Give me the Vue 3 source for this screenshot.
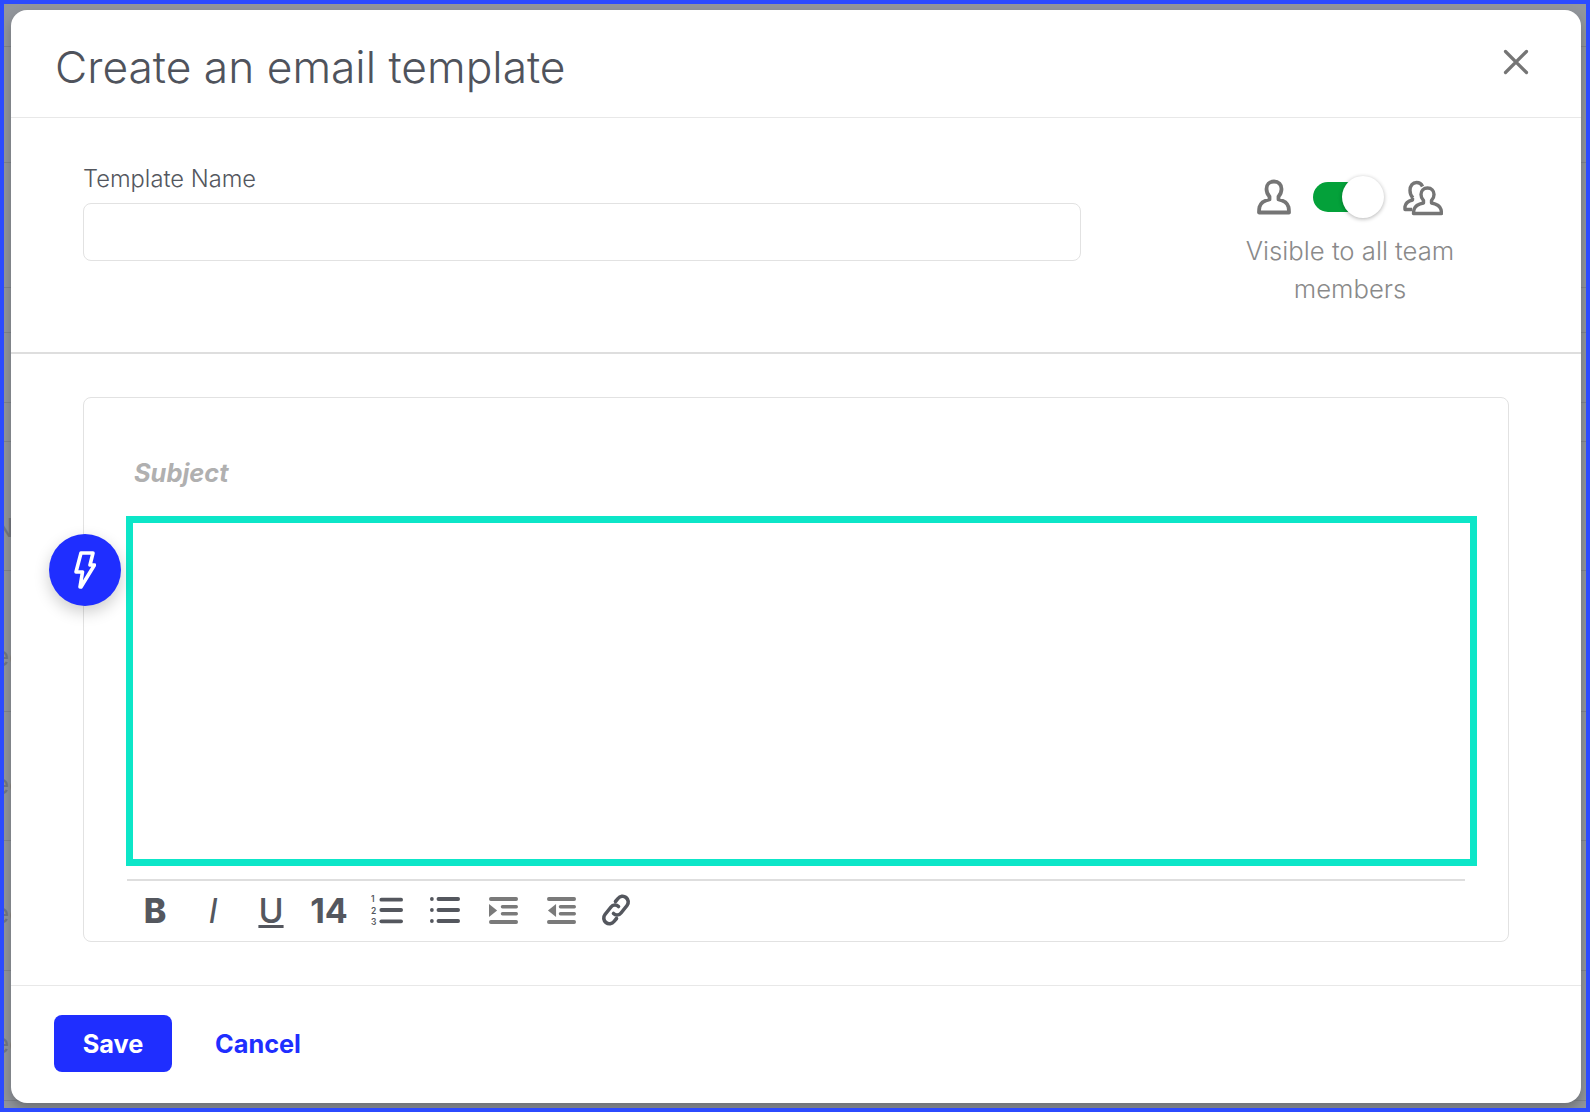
<script setup>
const rowLines = [46, 162, 287, 332, 402, 441, 570, 711, 840, 970, 1100]
const rowTexts = [
  { top: 511, text: 'N' },
  { top: 640, text: 'ec' },
  { top: 768, text: 'ec' },
  { top: 897, text: 'ec' },
  { top: 1027, text: 'ec' },
]
const tools = ['outdent', 'indent']
</script>

<template>
  <div class="page">
    <div class="row-line" v-for="y in rowLines" :key="y" :style="{ top: y - 4 + 'px' }"></div>
    <span class="row-text" v-for="t in rowTexts" :key="t.top" :style="{ top: t.top - 4 + 'px' }">{{ t.text }}</span>
    <div class="modal">
      <header class="modal-head">
        <h1>Create an email template</h1>
        <button class="close" aria-label="Close">
          <svg width="26" height="26" viewBox="0 0 26 26" fill="none" stroke="#757575" stroke-width="3.200" stroke-linecap="round">
            <path d="M2.500 2.500l21 21M23.500 2.500l-21 21" />
          </svg>
        </button>
      </header>

      <section class="name-row">
        <div class="name-field">
          <label>Template Name</label>
          <input type="text" />
        </div>
        <div class="visibility">
          <div class="toggle-row">
            <svg class="person" width="34" height="36" viewBox="0 0 34 36" fill="none" stroke="#757575" stroke-width="3.800" stroke-linejoin="round">
              <path d="M17 2.500c-4.600 0-7.500 3.200-7.500 7.500 0 3.200 1.200 5.600 3 7.500v3c-5.500 1-9 3.500-10 7.500-.4 1.800-.5 5.500-.5 5.500h30s-.1-3.700-.5-5.500c-1-4-4.500-6.500-10-7.500v-3c1.800-1.900 3-4.300 3-7.500 0-4.300-2.900-7.500-7.500-7.500z" />
            </svg>
            <div class="switch"><span class="knob"></span></div>
            <svg width="40" height="38" viewBox="0 0 40 38" fill="none" stroke="#757575" stroke-width="3.400" stroke-linejoin="round">
              <path d="M10 20c-2-2-3-4-3-7.500 0-5 2.800-8 6.500-8 3 0 5 1.500 6 4" />
              <path d="M9.500 20v2c-4 1-7 3-7.500 6.500-.1 1 0 3 0 3h7" />
              <path d="M24.500 10c-4 0-6.500 3-6.500 6.500 0 2.500 1 4.500 2.500 6v2.500c-5 1-8.500 3-9.500 6.500-.3 1-.5 4-.5 4h28s-.2-3-.5-4c-1-3.500-4.500-5.500-9.500-6.500V22.500c1.500-1.500 2.500-3.500 2.500-6 0-3.500-2.500-6.500-6.500-6.500z" />
            </svg>
          </div>
          <p>Visible to all team members</p>
        </div>
      </section>

      <section class="editor-wrap">
        <div class="editor-card">
          <div class="subject">Subject</div>
          <div class="body-box"></div>
          <div class="toolbar">
            <span class="tool tool-b">B</span>
            <span class="tool tool-i">I</span>
            <span class="tool tool-u">U</span>
            <span class="tool tool-size">14</span>
            <span class="tool">
              <svg width="32" height="32" viewBox="0 0 34 32" fill="#54575e">
                <text x="0" y="8" font-size="9" font-weight="600" font-family="Inter">1</text>
                <text x="0" y="20" font-size="9" font-weight="600" font-family="Inter">2</text>
                <text x="0" y="32" font-size="9" font-weight="600" font-family="Inter">3</text>
                <rect x="9" y="3" width="25" height="4" rx="2" />
                <rect x="9" y="14" width="25" height="4" rx="2" />
                <rect x="9" y="26" width="25" height="4" rx="2" />
              </svg>
            </span>
            <span class="tool">
              <svg width="30" height="32" viewBox="0 0 32 32" preserveAspectRatio="none" fill="#54575e">
                <circle cx="2" cy="5" r="2" /><circle cx="2" cy="16" r="2" /><circle cx="2" cy="27" r="2" />
                <rect x="7" y="3" width="25" height="4" rx="2" />
                <rect x="7" y="14" width="25" height="4" rx="2" />
                <rect x="7" y="25" width="25" height="4" rx="2" />
              </svg>
            </span>
            <span class="tool" v-for="t in tools" :key="t">
              <svg width="29" height="32" viewBox="0 0 32 32" preserveAspectRatio="none" fill="#7a7a7a">
                <rect x="0" y="3" width="32" height="4" rx="2" />
                <rect x="13" y="11" width="19" height="3.600" rx="1.800" />
                <rect x="13" y="18" width="19" height="3.600" rx="1.800" />
                <rect x="0" y="26" width="32" height="4" rx="2" />
                <path v-if="t === 'outdent'" d="M0 10l9 6.500-9 6.500z" />
                <path v-else d="M10 10l-9 6.500 9 6.500z" />
              </svg>
            </span>
            <span class="tool tool-link">
              <svg width="30" height="34" viewBox="0 0 30 34" fill="none" stroke="#54575e" stroke-width="3.600" stroke-linecap="round">
                <path d="M12.500 20.500c2 2 5.500 2 7.500-.5l6-7.500c2-2.500 1.500-6-1-8s-6-1.500-8 1l-2.500 3" />
                <path d="M17.500 13.500c-2-2-5.500-2-7.500.5l-6 7.500c-2 2.500-1.500 6 1 8s6 1.500 8-1l2.500-3" />
              </svg>
            </span>
          </div>
        </div>
        <button class="bolt" aria-label="Snippets">
          <svg width="22" height="38" viewBox="0 0 22 38" fill="none" stroke="#fff" stroke-width="3.600" stroke-linejoin="round">
            <path d="M7 2h12l-3 12h4.500L7 36H6l2.500-15H2z" />
          </svg>
        </button>
      </section>

      <footer class="modal-foot">
        <button class="save">Save</button>
        <button class="cancel">Cancel</button>
      </footer>
    </div>
  </div>
</template>

<style>
html, body { margin: 0; }
</style>

<style scoped>
.page {
  position: relative;
  width: 1590px;
  height: 1112px;
  box-sizing: border-box;
  border: 4px solid #2c4bff;
  background: #92969c;
  font-family: Inter, "Liberation Sans", sans-serif;
  overflow: hidden;
}

.row-line {
  position: absolute;
  left: 0;
  right: 0;
  height: 1px;
  background: #82868c;
}

.row-text {
  position: absolute;
  left: -10px;
  font-size: 26px;
  line-height: 34px;
  color: #75797f;
}

.modal {
  position: absolute;
  left: 7px;
  top: 6px;
  width: 1570px;
  height: 1093px;
  background: #fff;
  border-radius: 16px;
  display: flex;
  flex-direction: column;
  box-shadow: 0 6px 12px rgba(0, 0, 0, 0.25);
}

.modal-head {
  height: 107px;
  border-bottom: 1px solid #e8e8e8;
  display: flex;
  align-items: center;
  justify-content: space-between;
  padding: 0 52px 0 44px;
  flex-shrink: 0;
}

.modal-head h1 {
  margin: 6px 0 0;
  font-size: 44.300px;
  font-weight: 300;
  color: #4f535c;
}

.close {
  background: none;
  border: none;
  padding: 0;
  display: flex;
  margin-bottom: 4px;
}

.name-row {
  height: 236px;
  border-bottom: 2px solid #dedede;
  display: flex;
  justify-content: space-between;
  padding: 46px 101px 0 72px;
  box-sizing: border-box;
  flex-shrink: 0;
}

.name-field {
  width: 998px;
}

.name-field label {
  display: block;
  font-size: 23.700px;
  color: #54575e;
  font-weight: 300;
  margin-bottom: 10px;
}

.name-field input {
  display: block;
  width: 100%;
  height: 58px;
  box-sizing: border-box;
  border: 1px solid #e2e2e2;
  border-radius: 8px;
}

.visibility {
  width: 260px;
  margin-top: 11px;
  text-align: center;
}

.toggle-row {
  display: flex;
  align-items: center;
  justify-content: center;
  gap: 20px;
  height: 44px;
}

.person {
  margin-right: 2px;
}

.switch {
  position: relative;
  width: 70px;
  height: 30px;
  border-radius: 15px;
  background: #04a13a;
}

.knob {
  position: absolute;
  right: -1px;
  top: -6px;
  width: 42px;
  height: 42px;
  border-radius: 50%;
  background: #fff;
  box-shadow: 0 1px 4px rgba(0, 0, 0, 0.3);
}

.visibility p {
  margin: 13px 0 0;
  font-size: 25.700px;
  font-weight: 300;
  line-height: 38px;
  color: #8a8a8a;
}

.editor-wrap {
  position: relative;
  flex: 1;
  padding: 43px 72px 43px 72px;
  display: flex;
}

.editor-card {
  flex: 1;
  box-sizing: border-box;
  border: 1px solid #e2e2e2;
  border-radius: 8px;
  padding: 0 43px 0 41px;
  display: flex;
  flex-direction: column;
}

.subject {
  margin: 60px 0 28px 9px;
  font-size: 25.400px;
  font-weight: 700;
  font-style: italic;
  color: #b0b0b0;
  line-height: 30px;
}

.body-box {
  height: 350px;
  flex-shrink: 0;
  box-sizing: border-box;
  border: 7px solid #0de6c8;
  margin: 0 -12px 0 1px;
}

.toolbar {
  margin: 13px 0 0 2px;
  border-top: 2px solid #dedede;
  display: flex;
  align-items: center;
  height: 58px;
}

.tool {
  width: 58px;
  display: flex;
  align-items: center;
  justify-content: center;
  color: #54575e;
  font-size: 34px;
  font-weight: 700;
}

.tool-b {
  margin-left: -1px;
  font-weight: 800;
}

.tool-i {
  font-weight: 400;
  font-style: italic;
}

.tool-u {
  text-decoration: underline;
  font-weight: 500;
}

.tool-link {
  margin-left: -3px;
}

.bolt {
  position: absolute;
  left: 38px;
  top: 180px;
  width: 72px;
  height: 72px;
  border: none;
  border-radius: 50%;
  background: #1f2eff;
  display: flex;
  align-items: center;
  justify-content: center;
  padding: 0;
  box-shadow: 0 6px 16px rgba(0, 0, 0, 0.2);
}

.modal-foot {
  height: 118px;
  border-top: 1px solid #e8e8e8;
  box-sizing: border-box;
  display: flex;
  align-items: center;
  gap: 43px;
  padding: 0 0 2px 43px;
  flex-shrink: 0;
}

.save {
  width: 118px;
  height: 57px;
  border: none;
  border-radius: 8px;
  background: #1f2eff;
  color: #fff;
  font: 700 25.300px Inter, "Liberation Sans", sans-serif;
}

.cancel {
  border: none;
  background: none;
  padding: 0;
  color: #1f2eff;
  font: 700 25.300px Inter, "Liberation Sans", sans-serif;
}
</style>
